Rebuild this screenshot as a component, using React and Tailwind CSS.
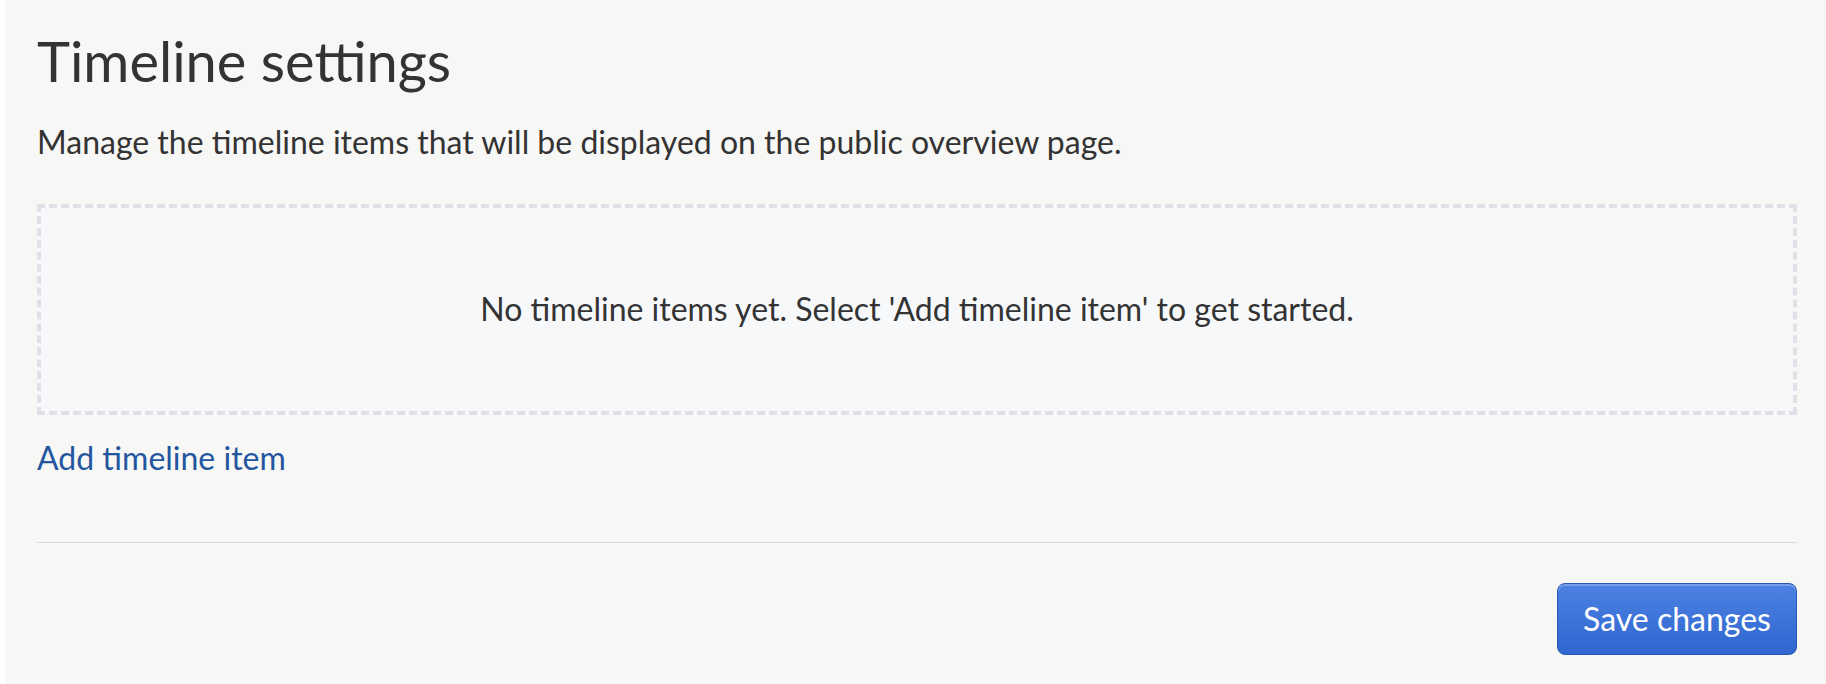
export default function App() {
  return (
    <div
      className="min-h-screen border-l-[5px] border-white bg-[#f7f7f5] pl-8 pr-[29px] pt-[27px] text-[#333333]"
      style={{ fontFamily: 'Lato, "Open Sans", sans-serif' }}
    >
      <h1 className="text-[56px] leading-[1.2] font-normal">Timeline settings</h1>
      <p className="mt-[29px] text-[32px] leading-[1.2]">
        Manage the timeline items that will be displayed on the public overview page.
      </p>

      {/* Empty state */}
      <div className="mt-[42px] flex h-[211px] items-center justify-center border-4 border-dashed border-[#dfe1e6] bg-[#f7f8fa]">
        <p className="text-[32px] leading-[1.2]">
          No timeline items yet. Select 'Add timeline item' to get started.
        </p>
      </div>

      <div className="mt-[24px]">
        <a href="#" className="text-[32px] leading-[1.2] text-[#2456a0]">
          Add timeline item
        </a>
      </div>

      <hr className="mt-[65px] border-0 border-t border-[#dadada]" />

      <div className="flex justify-end pt-[40px]">
        <button
          type="button"
          className="h-[72px] w-[240px] rounded-[8px] border border-[#2a58b0] bg-gradient-to-b from-[#4c82e3] to-[#2f66cf] text-[32px] leading-none text-white shadow-[inset_0_2px_0_rgba(255,255,255,0.25)]"
        >
          Save changes
        </button>
      </div>
    </div>
  );
}
